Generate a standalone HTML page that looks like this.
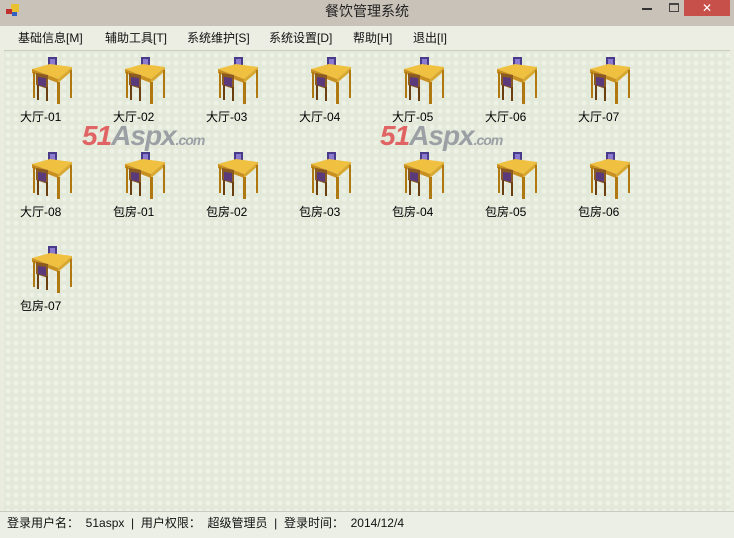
<!DOCTYPE html>
<html><head><meta charset="utf-8"><style>
body{margin:0;width:734px;height:537px;overflow:hidden;background:#c8c1b8;font-family:"Liberation Sans","Noto Sans CJK SC",sans-serif;position:relative}
.title{position:absolute;left:0;top:0;width:734px;height:26px;background:#c9c2b9;text-align:center;font-size:14px;line-height:22px;color:#222}
.close{position:absolute;right:4px;top:0;width:46px;height:16px;background:#c7504a;color:#fff;font-size:12px;line-height:16px;text-align:center}
.minb{position:absolute;left:642px;top:8px;width:10px;height:2px;background:#333}
.maxb{position:absolute;left:669px;top:3px;width:8px;height:6px;border:1px solid #444;border-top-width:2px}
.win{position:absolute;left:0;top:26px;width:734px;height:511px;background:#e9ecdf}
.menu{position:absolute;left:0;top:0;width:734px;height:24px;font-size:12px;line-height:24px;color:#111;background:#eceee4}
.menu span{position:absolute;top:0}
.content{position:absolute;left:4px;top:24px;width:726px;height:461px;background-color:#e3e9d9;background-image:radial-gradient(circle at 50% 50%,rgba(255,255,255,.35) 2px,transparent 3px);background-size:8px 8px;border-top:1px solid #c9cdc0}
.status{position:absolute;left:0;top:485px;width:734px;height:26px;background:#ecefe5;border-top:1px solid #c8ccc0;font-size:12px;line-height:22px;color:#111}
.item{position:absolute;width:60px}
.item svg{position:absolute;left:8px;top:0}
.item div{position:absolute;top:53px;left:0;font-size:12px;white-space:nowrap;color:#000}
.logo{position:absolute;font:italic bold 28px "Liberation Sans",sans-serif;color:#e06464;letter-spacing:-1px}
.logo b{color:#9aa0a4}
.logo i{font-size:14px;color:#9aa0a4}
</style></head><body>
<svg width="0" height="0" style="position:absolute"><defs>
<g id="t">
<rect x="20" y="2" width="9" height="10" fill="#4a3a8a"/><rect x="22" y="4" width="5" height="6" fill="#8a7ad0"/>
<polygon points="4,14 22,9 44,12 30,24" fill="#f0c040"/>
<polygon points="4,14 30,24 30,28 4,18" fill="#c89020"/>
<polygon points="30,24 44,12 44,16 30,28" fill="#d8a830"/>
<rect x="5" y="17" width="2" height="26" fill="#b07810"/><rect x="29" y="27" width="3" height="22" fill="#b07810"/><rect x="42" y="15" width="2" height="28" fill="#b07810"/>
<polygon points="8,18 20,20 20,34 8,30" fill="#8a5a20"/><polygon points="10,22 18,23 18,32 10,30" fill="#5a3a7a"/>
<rect x="9" y="30" width="2" height="15" fill="#6a4010"/><rect x="18" y="32" width="2" height="14" fill="#6a4010"/>
</g></defs></svg>
<div class="title">餐饮管理系统
<svg style="position:absolute;left:6px;top:4px" width="14" height="13"><rect x="5" y="0" width="8" height="8" fill="#e8c030"/><rect x="0" y="5" width="6" height="5" fill="#c03030"/><rect x="6" y="8" width="5" height="4" fill="#3060c0"/></svg>
</div>
<div class="minb"></div><div class="maxb"></div><div class="close">✕</div>
<div class="win">
<div class="menu"><span style="left:18px">基础信息[M]</span><span style="left:105px">辅助工具[T]</span><span style="left:187px">系统维护[S]</span><span style="left:269px">系统设置[D]</span><span style="left:353px">帮助[H]</span><span style="left:413px">退出[I]</span></div>
<div class="content"></div>
<div class="status"><span style="position:absolute;left:7px">登录用户名：&nbsp; 51aspx &nbsp;|&nbsp; 用户权限：&nbsp; 超级管理员 &nbsp;|&nbsp; 登录时间：&nbsp; 2014/12/4</span></div>
</div>
<div class="logo" style="left:82px;top:120px">51<b>Aspx</b><i>.com</i></div>
<div class="logo" style="left:380px;top:120px">51<b>Aspx</b><i>.com</i></div>
<div class="item" style="left:20px;top:55px"><svg width="50" height="50"><use href="#t"/></svg><div>大厅-01</div></div>
<div class="item" style="left:113px;top:55px"><svg width="50" height="50"><use href="#t"/></svg><div>大厅-02</div></div>
<div class="item" style="left:206px;top:55px"><svg width="50" height="50"><use href="#t"/></svg><div>大厅-03</div></div>
<div class="item" style="left:299px;top:55px"><svg width="50" height="50"><use href="#t"/></svg><div>大厅-04</div></div>
<div class="item" style="left:392px;top:55px"><svg width="50" height="50"><use href="#t"/></svg><div>大厅-05</div></div>
<div class="item" style="left:485px;top:55px"><svg width="50" height="50"><use href="#t"/></svg><div>大厅-06</div></div>
<div class="item" style="left:578px;top:55px"><svg width="50" height="50"><use href="#t"/></svg><div>大厅-07</div></div>
<div class="item" style="left:20px;top:150px"><svg width="50" height="50"><use href="#t"/></svg><div>大厅-08</div></div>
<div class="item" style="left:113px;top:150px"><svg width="50" height="50"><use href="#t"/></svg><div>包房-01</div></div>
<div class="item" style="left:206px;top:150px"><svg width="50" height="50"><use href="#t"/></svg><div>包房-02</div></div>
<div class="item" style="left:299px;top:150px"><svg width="50" height="50"><use href="#t"/></svg><div>包房-03</div></div>
<div class="item" style="left:392px;top:150px"><svg width="50" height="50"><use href="#t"/></svg><div>包房-04</div></div>
<div class="item" style="left:485px;top:150px"><svg width="50" height="50"><use href="#t"/></svg><div>包房-05</div></div>
<div class="item" style="left:578px;top:150px"><svg width="50" height="50"><use href="#t"/></svg><div>包房-06</div></div>
<div class="item" style="left:20px;top:244px"><svg width="50" height="50"><use href="#t"/></svg><div>包房-07</div></div>
</body></html>
